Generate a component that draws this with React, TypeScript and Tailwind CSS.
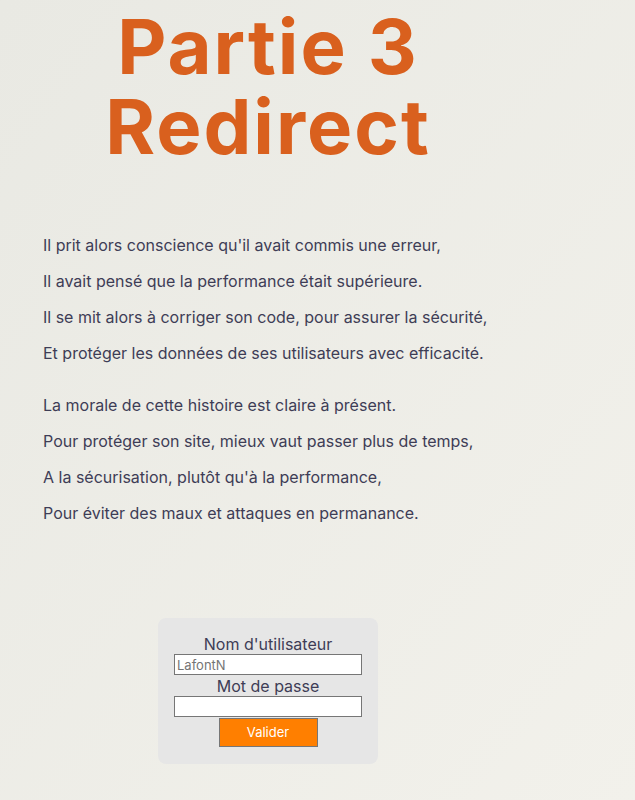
import React from "react";

const firstStanza = [
  "Il prit alors conscience qu'il avait commis une erreur,",
  "Il avait pensé que la performance était supérieure.",
  "Il se mit alors à corriger son code, pour assurer la sécurité,",
  "Et protéger les données de ses utilisateurs avec efficacité.",
];
const secondStanza = [
  "La morale de cette histoire est claire à présent.",
  "Pour protéger son site, mieux vaut passer plus de temps,",
  "A la sécurisation, plutôt qu'à la performance,",
  "Pour éviter des maux et attaques en permanance.",
];

export default function App() {
  return (
    <div
      className="min-h-[800px] w-full bg-gradient-to-br from-[#e9e9e3] to-[#f2f1eb]"
      style={{ fontFamily: "Inter, 'Noto Sans', sans-serif" }}
    >
      <div className="w-[536px] pt-[6px]">
        <h1 className="text-center text-[76px] leading-[80px] font-bold tracking-[2px] text-[#d9601e]">
          Partie 3
          <br />
          Redirect
        </h1>
        <div className="pl-[43px] pt-[67px] text-[16px] leading-[24px] text-[#3e3d56]">
          <div className="flex flex-col gap-[12px]">
            {firstStanza.map((l) => (
              <p key={l}>{l}</p>
            ))}
          </div>
          <div className="mt-[28px] flex flex-col gap-[12px]">
            {secondStanza.map((l) => (
              <p key={l}>{l}</p>
            ))}
          </div>
        </div>
        <div className="mt-[93px] flex justify-center">
          <form className="flex w-[220px] flex-col items-center rounded-[8px] bg-[#e6e6e6] pt-[16px] pb-[17px]">
            <label className="text-[16px] leading-[20px] text-[#3e3d56]">Nom d'utilisateur</label>
            <input
              placeholder="LafontN"
              className="h-[21px] w-[188px] border border-[#767676] bg-white px-[2px] text-[13px] text-[#555] placeholder:text-[#757575] outline-none"
            />
            <label className="mt-[1px] text-[16px] leading-[20px] text-[#3e3d56]">Mot de passe</label>
            <input
              type="password"
              className="h-[21px] w-[188px] border border-[#767676] bg-white px-[2px] text-[13px] outline-none"
            />
            <button
              type="button"
              className="mt-[1px] h-[29px] w-[99px] border border-[#767676] bg-[#ff7f00] text-[13px] text-white"
            >
              Valider
            </button>
          </form>
        </div>
      </div>
    </div>
  );
}
